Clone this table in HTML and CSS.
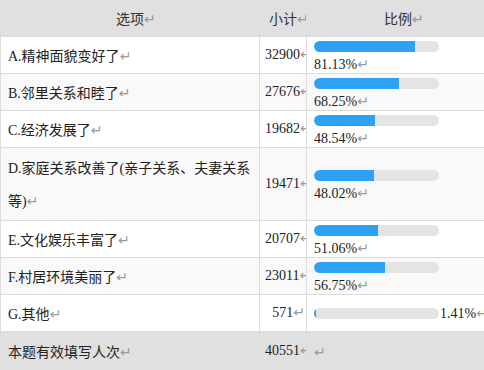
FILE: index.html
```html
<!DOCTYPE html>
<html lang="zh-CN">
<head>
<meta charset="utf-8">
<title>统计表</title>
<link rel="stylesheet" href="styles.css">
</head>
<body>
<div class="tbl">
  <div class="row head">
    <div class="c c1 hc"><span class="ht">选项<i class="pm hang">↵</i></span></div>
    <div class="c c2 hc"><span class="ht">小计<i class="pm hang">↵</i></span></div>
    <div class="c hc hc3"><span class="ht">比例<i class="pm hang">↵</i></span></div>
  </div>

  <div class="row">
    <div class="c c1"><div class="lbl">A.精神面貌变好了<i class="pm">↵</i></div></div>
    <div class="c c2"><span class="num">32900<i class="pm">↵</i></span></div>
    <div class="c c3"><div class="bar"><div class="fill" style="width:81.13%"></div></div><div class="pct">81.13%<i class="pm">↵</i></div></div>
  </div>

  <div class="row alt">
    <div class="c c1"><div class="lbl">B.邻里关系和睦了<i class="pm">↵</i></div></div>
    <div class="c c2"><span class="num">27676<i class="pm">↵</i></span></div>
    <div class="c c3"><div class="bar"><div class="fill" style="width:68.25%"></div></div><div class="pct">68.25%<i class="pm">↵</i></div></div>
  </div>

  <div class="row">
    <div class="c c1"><div class="lbl">C.经济发展了<i class="pm">↵</i></div></div>
    <div class="c c2"><span class="num">19682<i class="pm">↵</i></span></div>
    <div class="c c3"><div class="bar"><div class="fill" style="width:48.54%"></div></div><div class="pct">48.54%<i class="pm">↵</i></div></div>
  </div>

  <div class="row alt tall">
    <div class="c c1"><div class="lbl">D.家庭关系改善了(亲子关系、夫妻关系等)<i class="pm">↵</i></div></div>
    <div class="c c2"><span class="num">19471<i class="pm">↵</i></span></div>
    <div class="c c3"><div class="bar"><div class="fill" style="width:48.02%"></div></div><div class="pct">48.02%<i class="pm">↵</i></div></div>
  </div>

  <div class="row">
    <div class="c c1"><div class="lbl">E.文化娱乐丰富了<i class="pm">↵</i></div></div>
    <div class="c c2"><span class="num">20707<i class="pm">↵</i></span></div>
    <div class="c c3"><div class="bar"><div class="fill" style="width:51.06%"></div></div><div class="pct">51.06%<i class="pm">↵</i></div></div>
  </div>

  <div class="row alt">
    <div class="c c1"><div class="lbl">F.村居环境美丽了<i class="pm">↵</i></div></div>
    <div class="c c2"><span class="num">23011<i class="pm">↵</i></span></div>
    <div class="c c3"><div class="bar"><div class="fill" style="width:56.75%"></div></div><div class="pct">56.75%<i class="pm">↵</i></div></div>
  </div>

  <div class="row">
    <div class="c c1"><div class="lbl">G.其他<i class="pm">↵</i></div></div>
    <div class="c c2"><span class="num">571<i class="pm">↵</i></span></div>
    <div class="c c3 inline"><div class="bar"><div class="fill" style="width:1.41%"></div></div><div class="pct">1.41%<i class="pm">↵</i></div></div>
  </div>

  <div class="row foot">
    <div class="c c1"><div class="lbl">本题有效填写人次<i class="pm">↵</i></div></div>
    <div class="c c2"><span class="num">40551<i class="pm">↵</i></span></div>
    <div class="c c3 inline"><i class="pm">↵</i></div>
  </div>
</div>
</body>
</html>
```

FILE: styles.css
```css
html, body {
  margin: 0;
  padding: 0;
  overflow: hidden;
  background: #ffffff;
}

body {
  font-family: "Liberation Serif", "Noto Sans CJK SC", serif;
  font-size: 14px;
  color: #222222;
}

.tbl {
  width: 489px;
  border-left: 1px solid #dcdcdc;
}

.row {
  display: grid;
  grid-template-columns: 259px 47px 182px;
  height: 37px;
  box-sizing: border-box;
  border-bottom: 1px solid #dcdcdc;
  background: #ffffff;
}

.row.alt {
  background: #f9f9f9;
}

.row.tall {
  height: 73px;
}

.row.head {
  background: #e0e0e0;
}

.row.foot {
  height: 38px;
  border-bottom: none;
  background: #e0e0e0;
}

.c {
  box-sizing: border-box;
  border-right: 1px solid #dcdcdc;
  min-width: 0;
  display: flex;
  align-items: center;
}

.c1 {
  padding: 2px 4px 0 7px;
}

.lbl {
  line-height: 33px;
}

.c2 {
  padding: 0 1px 0 5px;
  overflow: hidden;
}

.num {
  margin-left: auto;
  white-space: nowrap;
}

.c3 {
  border-right: none;
  flex-direction: column;
  align-items: flex-start;
  justify-content: center;
  padding: 4px 0 0 7px;
}

.c3.inline {
  flex-direction: row;
  align-items: center;
  justify-content: flex-start;
  padding-top: 0;
}

.hc {
  justify-content: center;
  color: #333333;
  padding: 0;
}

.hc3 {
  border-right: none;
}

.ht {
  font-family: "Noto Sans CJK SC", sans-serif;
  white-space: nowrap;
}

.bar {
  flex: none;
  width: 125px;
  height: 11px;
  border-radius: 6px;
  background: #e3e4e6;
  overflow: hidden;
}

.fill {
  height: 100%;
  background: #2ca1f6;
  border-radius: 6px 0 0 6px;
}

.pct {
  line-height: 17px;
  margin-top: 4px;
  white-space: nowrap;
}

.c3.inline .pct {
  margin-top: 0;
  margin-left: 1px;
}

.pm {
  font-style: normal;
  font-family: "Noto Sans CJK SC", "DejaVu Sans", sans-serif;
  font-size: 14px;
  line-height: 0;
  color: #9a9a9a;
}

.hang {
  display: inline-block;
  width: 0;
}
```
